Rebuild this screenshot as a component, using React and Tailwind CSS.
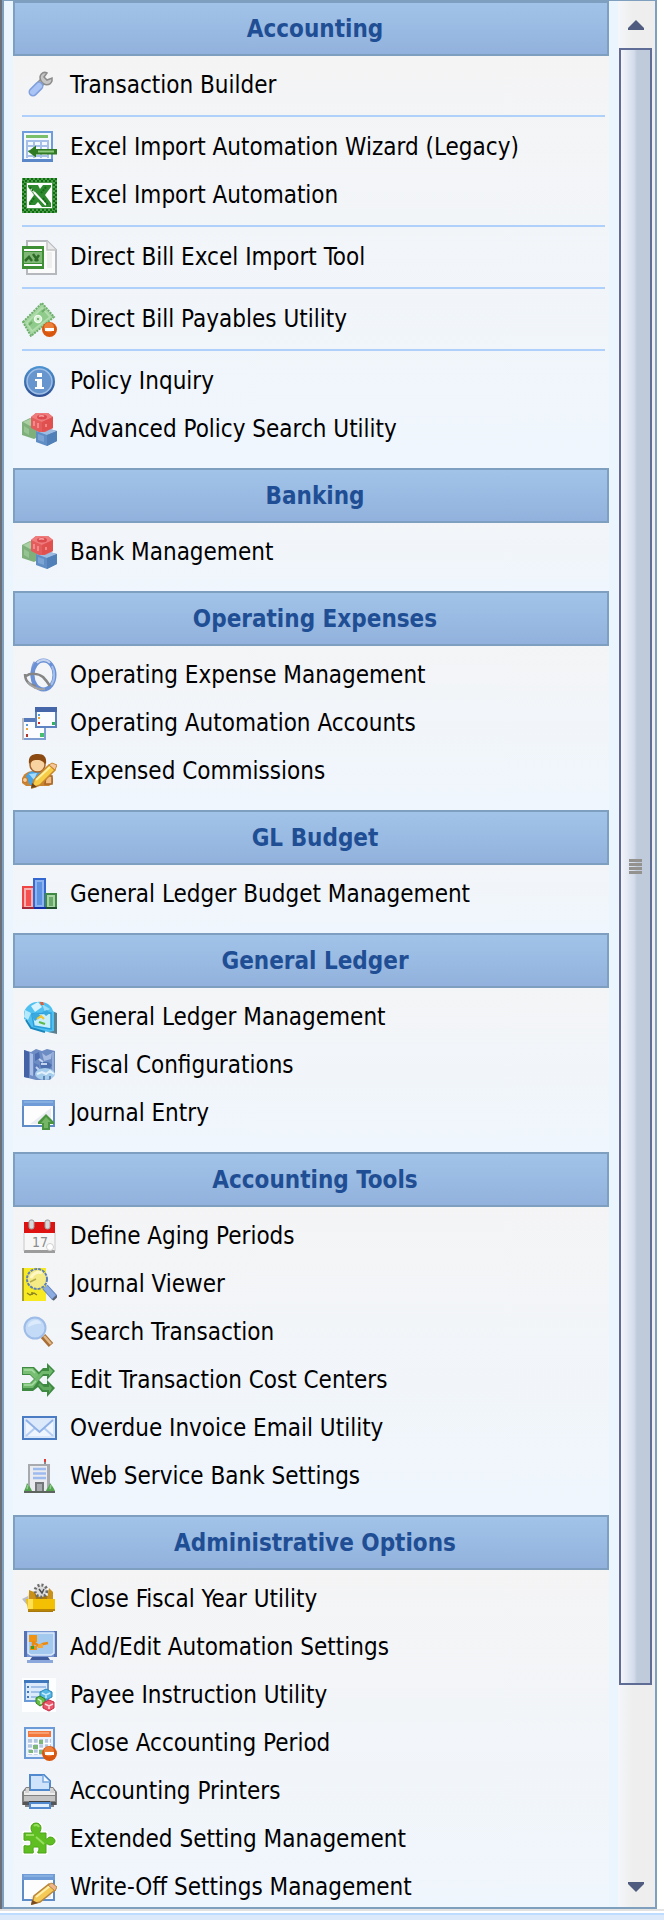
import React from 'react';

function Icon({ children }) {
  return (
    <svg viewBox="0 0 35 35" className="w-[35px] h-[35px] shrink-0" aria-hidden="true">
      {children}
    </svg>
  );
}

// small orange "minus" badge shared by a few icons
function MinusBadge() {
  return (
    <g>
      <circle cx="27.5" cy="27.5" r="7.5" fill="#d9560f" />
      <circle cx="27" cy="25.5" r="5" fill="#f08a45" opacity="0.8" />
      <rect x="23" y="26" width="9" height="3" fill="#fff" />
    </g>
  );
}

function WrenchIcon() {
  return (
    <Icon>
      <path d="M17 17l5-5" stroke="#8f8f8f" strokeWidth="7" />
      <path d="M17 17l5-5" stroke="#d4d4d4" strokeWidth="4" />
      <path d="M25 5c-4-2-9 2-6 8 3 5 9 5 11 0v-3l-5 2-3-3z" fill="#c6c6c6" stroke="#8c8c8c" strokeWidth="1.5" />
      <path d="M11 24l6-6" stroke="#7f9fdd" strokeWidth="9" strokeLinecap="round" />
      <path d="M11 24l6-6" stroke="#a9c4f5" strokeWidth="6" strokeLinecap="round" />
    </Icon>
  );
}

function SheetImportIcon() {
  return (
    <Icon>
      <rect x="1" y="2" width="29" height="29" fill="#f4f9ff" stroke="#6f9ddb" strokeWidth="2" />
      <rect x="4" y="5" width="22" height="3" fill="#7cbf6b" />
      <path d="M4 11h22M4 16h22M4 21h22M4 26h22M5 10v18M12 10v18M19 10v18M26 10v18" stroke="#a6bfe6" strokeWidth="2" />
      <rect x="0" y="29" width="31" height="3" fill="#5b86c7" />
      <path d="M6 21.500l8-6v3.500h21v5.500H14v3z" fill="#2f7a22" />
      <path d="M16 21.500h16" stroke="#8cc97e" strokeWidth="2" />
    </Icon>
  );
}

function ExcelIcon() {
  return (
    <Icon>
      <rect width="35" height="35" fill="#4d994d" />
      <rect x="1" y="1" width="33" height="33" fill="none" stroke="#0c6f0c" strokeWidth="2" strokeDasharray="2 2" />
      <rect x="3" y="3" width="29" height="29" fill="none" stroke="#0c6f0c" strokeWidth="2" strokeDasharray="2 2" />
      <rect x="5" y="5" width="25" height="25" fill="#fff" />
      <path d="M6 7h10l2 4 3-4h8v2l-6 8 6 8v4h-9l-4-5-3 3H7v-3l5-7-6-8z" fill="#2f8a2f" />
      <path d="M9 11l15 16" stroke="#fff" strokeWidth="2" />
      <path d="M8 9l4 5M24 9l-5 6M12 20l-4 6M21 20l5 7" stroke="#176c17" strokeWidth="2" strokeDasharray="2 1" />
    </Icon>
  );
}

function ExcelDocIcon() {
  return (
    <Icon>
      <path d="M5 1h20l9 9v24H5z" fill="#fbfbfb" stroke="#b5b9bd" strokeWidth="2" />
      <path d="M25 1v9h9" fill="#e9e9e9" stroke="#c4c4c4" strokeWidth="1.5" />
      <path d="M25 12h5v16h-5z" fill="#efefef" />
      <rect y="6" width="22" height="23" fill="#3f8f35" />
      <rect x="2" y="9" width="18" height="2" fill="#fff" />
      <rect x="2" y="24" width="18" height="2" fill="#fff" />
      <rect x="2" y="12" width="18" height="11" fill="#7fb776" />
      <path d="M3 21l4-4 3 4M11 14l5 7M17 15l-4 6" stroke="#2e6d27" strokeWidth="2.5" fill="none" />
    </Icon>
  );
}

function MoneyIcon() {
  return (
    <Icon>
      <path d="M1 20L20 1l12 14L9 34z" fill="#a5d6a1" stroke="#6fae6c" strokeWidth="2" strokeDasharray="2 1" />
      <path d="M5 21L20 6l8 9L10 29z" fill="#8fcb8b" stroke="#b5deb0" strokeWidth="1.5" />
      <path d="M7 23l3-3M20 10l3-3" stroke="#6dae69" strokeWidth="2" />
      <circle cx="16" cy="17" r="3.500" fill="#d5efd1" stroke="#f0faee" strokeWidth="1.5" />
      <circle cx="16" cy="17" r="1" fill="#5c9f5a" />
      <MinusBadge />
    </Icon>
  );
}

function InfoIcon() {
  return (
    <Icon>
      <defs>
        <linearGradient id="info" x2="0" y2="1">
          <stop offset="0" stopColor="#4d95d3" />
          <stop offset="1" stopColor="#2d4f92" />
        </linearGradient>
      </defs>
      <circle cx="17.5" cy="17.5" r="15.5" fill="url(#info)" />
      <circle cx="17.5" cy="17.5" r="12.5" fill="#6796cf" stroke="#a0bfe6" strokeWidth="1.5" />
      <rect x="15" y="9" width="5" height="4" fill="#fff" />
      <path d="M13 15h7v8h2v2h-9v-2h2v-6h-2z" fill="#fff" />
    </Icon>
  );
}

function CubesIcon() {
  return (
    <Icon>
      <path d="M0 10l8-4 8 4v15l-4 2-12-4z" fill="#7fb07c" />
      <path d="M1 10l7-3 7 3-7 4z" fill="#a9cfa3" />
      <path d="M2 14l5 3v6l-5-3z" fill="#95c391" />
      <path d="M14 19l10-3 11 3v10l-10 5-11-4z" fill="#5f8dc4" />
      <path d="M14 19l10-3 11 3-10 4z" fill="#9dbce2" />
      <path d="M25 23v11l10-5V19z" fill="#5180b8" />
      <path d="M16 22l6 2v6l-6-2z" fill="#7ba3d4" />
      <path d="M9 5l5-4h12l5 4v11l-8 4h-6l-8-4z" fill="#e45c5c" strokeLinejoin="round" />
      <path d="M9 5l5-4h12l5 4-11 5z" fill="#ee7c7c" />
      <path d="M20 10v10l11-4V5z" fill="#e0504f" />
      <ellipse cx="20" cy="5" rx="5" ry="2.5" fill="#dc4a50" />
      <path d="M17 4.500c1-1 4-1 5 0" fill="none" stroke="#f7a3a3" strokeWidth="1.5" />
      <path d="M12 9v5M16 11v5M24 12v3" stroke="#f29a9a" strokeWidth="1.5" />
    </Icon>
  );
}

function RingIcon() {
  return (
    <Icon>
      <path d="M13 4C9 10 9 24 14 30" fill="none" stroke="#8ba4d6" strokeWidth="3" />
      <ellipse cx="21.5" cy="17" rx="11" ry="14.5" fill="none" stroke="#6a90d6" strokeWidth="4" />
      <path d="M15 5c3-4 10-4 13 0" fill="none" stroke="#c6d4ee" strokeWidth="2" />
      <path d="M30 8c3 6 3 14-1 19" fill="none" stroke="#a5bde9" strokeWidth="2" />
      <path d="M3 16c0 8 6 12 11 12M4 18c4-3 12-3 17 1 3 3 5 6 7 9" fill="none" stroke="#858585" strokeWidth="2.5" />
      <path d="M6 24c3 5 10 8 17 7" fill="none" stroke="#a3a3a3" strokeWidth="2" />
    </Icon>
  );
}

function WindowsIcon() {
  return (
    <Icon>
      <rect x="1" y="13" width="22" height="20" fill="#fbfcff" stroke="#7f9fd2" strokeWidth="2" />
      <rect x="0" y="12" width="24" height="4" fill="#5579b9" />
      <rect x="0" y="12" width="2" height="22" fill="#b9bdc4" />
      <rect x="4" y="18" width="2" height="2" fill="#5b9bd8" />
      <rect x="4" y="22" width="2" height="2" fill="#f0a531" />
      <rect x="4" y="28" width="2" height="3" fill="#b4342b" />
      <rect x="18" y="27" width="4" height="4" fill="#46c06c" />
      <rect x="14" y="2" width="20" height="19" fill="#fbfcff" stroke="#5c82c2" strokeWidth="2" />
      <rect x="13" y="1" width="22" height="5" fill="#4566a8" />
      <rect x="16" y="8" width="2" height="2" fill="#5b9bd8" />
      <rect x="16" y="11" width="2" height="2" fill="#f0a531" />
      <rect x="16" y="16" width="2" height="2" fill="#d02a25" />
      <rect x="30" y="16" width="3" height="3" fill="#2fb45a" />
    </Icon>
  );
}

function PersonPencilIcon() {
  return (
    <Icon>
      <path d="M0 25c1-5 6-8 11-8h10c5 0 9 4 10 8v4l-4 3H4l-4-3z" fill="#c98335" />
      <path d="M4 23c1-4 5-6 9-6h7l-5 14H8z" fill="#45a3e6" />
      <path d="M7 20l5 6 3-7z" fill="#a6dbfb" />
      <path d="M24 22h6v8h-7z" fill="#f2bd85" stroke="#a66423" strokeWidth="1.5" />
      <circle cx="3" cy="26" r="2.5" fill="#f6cfa0" stroke="#c57b2c" strokeWidth="1.2" />
      <ellipse cx="15.5" cy="11" rx="7.5" ry="7" fill="#f9d2a2" stroke="#a9652a" strokeWidth="1.5" />
      <path d="M7 10c-1-8 3-10 9-10s9 3 8 10c-4-3-5-4-8-4-4 0-6 0-9 4z" fill="#8a4a12" />
      <path d="M10 34l2-8L27 11l6 5-15 15z" fill="#f7cc47" stroke="#c9872b" strokeWidth="1.5" />
      <path d="M14 26l14-13" stroke="#fff0a0" strokeWidth="2" />
      <path d="M27 11l3-2 5 2-2 5z" fill="#f3c6a0" stroke="#c9872b" strokeWidth="1" />
      <path d="M9 34l1-5 5 4z" fill="#6d4318" />
    </Icon>
  );
}

function BarsIcon() {
  return (
    <Icon>
      <rect x="1" y="10" width="11" height="21" fill="#f9b0b0" stroke="#ef4444" strokeWidth="2" />
      <rect x="4" y="13" width="5" height="16" fill="#f65050" />
      <rect x="12" y="2" width="11" height="29" fill="#8db4ee" stroke="#3467cf" strokeWidth="2" />
      <rect x="15" y="5" width="5" height="23" fill="#5e92e2" />
      <rect x="24" y="17" width="10" height="14" fill="#a9d3a6" stroke="#3f8a42" strokeWidth="2" />
      <rect x="27" y="20" width="4" height="9" fill="#6aa96b" />
      <path d="M0 31h12" stroke="#a12a3a" strokeWidth="2" />
      <path d="M12 31h12" stroke="#1330a8" strokeWidth="2" />
      <path d="M24 31h11" stroke="#1d4f2a" strokeWidth="2" />
    </Icon>
  );
}

function LedgerBoxIcon() {
  return (
    <Icon>
      <path d="M2 12C5 4 12 1 20 2c7 1 10 5 11 9l3 2v20l-8-1-17-4-3-7-4-2z" fill="#4fc0f0" />
      <path d="M32 12l3 1v21l-9-2 6-1z" fill="#5a7f8f" />
      <path d="M9 6l7-4 4 5-7 5z" fill="#d8f3fd" />
      <path d="M20 4l8 5-5 3z" fill="#9bdcf7" />
      <path d="M18 2l3 0 1 3-3 0z" fill="#ea5a2c" />
      <path d="M3 10l6 3-3 7-4-3z" fill="#b8e9fb" />
      <path d="M10 14l19-1v16l-17-3z" fill="#c9effb" stroke="#2a9fdb" strokeWidth="1.5" />
      <path d="M9 16l5-4 5 4-6 5zM20 12l5-2 3 3-4 3z" fill="#3aa9df" />
      <path d="M15 19l4-3 3 3" stroke="#f2c531" strokeWidth="2" fill="none" />
      <path d="M17 22l6 2" stroke="#5cb848" strokeWidth="2" />
      <path d="M4 20l5 8 14 4" stroke="#1a86bd" strokeWidth="2" fill="none" />
    </Icon>
  );
}

function FiscalIcon() {
  return (
    <Icon>
      <path d="M2 2l7 2 5-3 6 2 5-2 8 2v22l-5 7H14L2 29z" fill="#6d8cc4" />
      <path d="M2 2l5 2v26l-5-1z" fill="#4562a6" />
      <path d="M8 5l3 1v22l-3-1z" fill="#a9bfe5" />
      <path d="M13 6l4-2 1 6-5 3z" fill="#4e6eb1" />
      <path d="M20 5l4 3 6-3-1 6-7 2z" fill="#a5bbe2" />
      <path d="M12 15l5 2v8l-5 2z" fill="#5a79b8" />
      <path d="M18 14h8l4 3-3 5-8-1z" fill="#4d6fae" />
      <path d="M19 16h6M14 19l4 4M17 11l4 3" stroke="#c3d4ee" strokeWidth="2" />
      <path d="M31 4v20" stroke="#93abd7" strokeWidth="2" />
      <ellipse cx="23" cy="26" rx="10" ry="6" fill="#a7cdec" />
      <path d="M15 26l5-2 4 2 4-3 4 3" fill="none" stroke="#e0f1fc" strokeWidth="2" />
      <path d="M22 28v4M28 28v3" stroke="#6389b8" strokeWidth="2" />
    </Icon>
  );
}

function WindowFrame() {
  return (
    <g>
      <rect x="1" y="5" width="31" height="25" fill="#fdfdfe" stroke="#5f8cc6" strokeWidth="2" />
      <rect x="0" y="4" width="33" height="6" fill="#6f9cd6" />
      <path d="M2 6h29" stroke="#9cc0ec" strokeWidth="1" />
      <path d="M29 12v16H8z" fill="#e9ecf1" />
    </g>
  );
}

function WindowUpIcon() {
  return (
    <Icon>
      <WindowFrame />
      <path d="M24 18l8 8v2h-4v6h-8v-6h-4v-2z" fill="#4a9440" />
      <path d="M24 21l5 5h-3v6h-4v-5h-3z" fill="#74b566" />
    </Icon>
  );
}

function CalendarIcon() {
  return (
    <Icon>
      <rect x="2" y="3" width="31" height="31" fill="#f7f7f7" />
      <rect x="2" y="3" width="31" height="11" fill="#df1212" />
      <path d="M2 31h31v3H2z" fill="#9c9c9c" />
      <path d="M2 14v18M33 14v18" stroke="#c8c8c8" strokeWidth="1" />
      <rect x="7" y="1" width="5" height="9" rx="2" fill="#d9d9d9" stroke="#9c9c9c" />
      <rect x="23" y="1" width="5" height="9" rx="2" fill="#d9d9d9" stroke="#9c9c9c" />
      <text x="10" y="28" fontSize="14" fill="#8b8b8b" fontFamily="DejaVu Sans Condensed, sans-serif">17</text>
      <circle cx="28" cy="28" r="3.5" fill="#fff" stroke="#d0d0d0" />
    </Icon>
  );
}

function JournalIcon() {
  return (
    <Icon>
      <rect x="0" y="1" width="24" height="33" fill="#f8ea22" />
      <rect x="0" y="1" width="2" height="33" fill="#a39a36" />
      <path d="M5 26l3 2 4-2 3 2M10 28v-3" stroke="#8c8423" strokeWidth="1.5" fill="none" />
      <path d="M23 20l10 11" stroke="#6384c2" strokeWidth="7" />
      <path d="M23 20l9 10" stroke="#8cabde" strokeWidth="5" />
      <path d="M31 33l4-4" stroke="#5c6370" strokeWidth="2" />
      <circle cx="15" cy="12" r="10" fill="#f4ea86" stroke="#5d7fb5" strokeWidth="2" strokeDasharray="3 1" />
      <path d="M9 11c2-5 7-7 11-5" stroke="#fdf7c4" strokeWidth="3" fill="none" />
      <path d="M8 15l6-3" stroke="#b5a94e" strokeWidth="1.5" />
    </Icon>
  );
}

function MagnifierIcon() {
  return (
    <Icon>
      <path d="M21 21l8 9" stroke="#a86e35" strokeWidth="6" />
      <path d="M22 21l7 8" stroke="#e0b888" strokeWidth="2.5" />
      <circle cx="13" cy="13" r="10.5" fill="#c4dbf8" stroke="#9dbce8" strokeWidth="2" />
      <path d="M6 12c0-4 4-7 8-7 3 0 5 2 5 4-4-1-8 1-13 3z" fill="#dcebfc" />
    </Icon>
  );
}

function ShuffleIcon() {
  return (
    <Icon>
      <path d="M0 4h12l5 5 4-4h4V0l8 8-8 9v-4h-4l-4 4 4 4h4v-4l8 8-8 9v-5h-5l-4-5-5 4H0v-8h8l4-4-4-4H0z" fill="#3f8a42" />
      <path d="M1 5h10l6 7-4 4-5-5H1z" fill="#78bf74" />
      <path d="M1 20h8L20 8h7V4l4 4-4 5v-2h-6L11 25H1z" fill="#6fb86c" />
      <path d="M18 20l4 4h5v-3l3 4-3 5v-3h-6l-5-5z" fill="#5fa85e" />
      <path d="M2 7h8l3 3M2 22h8l4-4" stroke="#a9dca4" strokeWidth="1.5" fill="none" />
    </Icon>
  );
}

function MailIcon() {
  return (
    <Icon>
      <rect x="1" y="6" width="33" height="22" fill="#eef5ff" stroke="#4a7cc4" strokeWidth="2" />
      <rect x="3" y="8" width="29" height="18" fill="none" stroke="#c5d8f5" />
      <path d="M4 25l9-8M31 25l-9-8" stroke="#b4cdf2" strokeWidth="2" />
      <path d="M4 9l13.500 12L31 9z" fill="#dce9fb" />
      <path d="M4 9l13.500 12L31 9" fill="none" stroke="#8fb1e6" strokeWidth="2" />
    </Icon>
  );
}

function BuildingIcon() {
  return (
    <Icon>
      <rect x="22" y="1" width="2" height="6" fill="#8b8b8b" />
      <rect x="22" y="0" width="2" height="3" fill="#e03a31" />
      <rect x="6" y="5" width="22" height="28" fill="#a7abb0" />
      <rect x="8" y="7" width="17" height="26" fill="#e9ebee" />
      <path d="M11 10h13M11 14.500h13M11 19h13" stroke="#9dbbee" strokeWidth="2.5" />
      <rect x="13" y="23" width="9" height="10" fill="#74777a" />
      <rect x="15" y="25" width="5" height="8" fill="#a8abae" />
      <path d="M2 32c1-2 2-4 3-8 2 3 4 5 5 8zM24 32c1-3 3-4 4-8 2 3 4 5 5 8z" fill="#54a351" />
      <path d="M5 30l1-4M28 30l1-4" stroke="#8fce8a" strokeWidth="1.5" />
      <rect x="2" y="32" width="31" height="2" fill="#5e655f" />
    </Icon>
  );
}

function FolderGearIcon() {
  return (
    <Icon>
      <path d="M0 17l6-3v10z" fill="#bdbdbd" />
      <path d="M7 10h6l2 4h14l2-4v20H6z" fill="#a8780c" />
      <circle cx="19" cy="9" r="6" fill="#dcdcdc" stroke="#6b6b6b" strokeWidth="3" strokeDasharray="2 2" />
      <path d="M17 7l3 4 2-4" stroke="#4e4e4e" strokeWidth="1.5" fill="none" />
      <path d="M7 8l5 2 2 7H7zM27 6l4 4v7h-6z" fill="#c9911a" />
      <path d="M4 17h29v11H6z" fill="#f3c004" />
      <path d="M6 17h5v10H6z" fill="#ffdf54" />
      <path d="M6 28h27" stroke="#b98505" strokeWidth="2" />
    </Icon>
  );
}

function MonitorIcon() {
  return (
    <Icon>
      <path d="M2 1h33v26H2z" fill="#7897d2" />
      <path d="M2 1h3v26H2zM32 1h3v26h-3z" fill="#5573b4" />
      <path d="M6 3h26v20l-3 2H9l-3-2z" fill="#a3c9ef" stroke="#dceafa" strokeWidth="1.5" />
      <rect x="7" y="5" width="8" height="7" fill="#f09312" />
      <path d="M11 12l6 4 4-2 5-1M11 11v6" stroke="#ea8a10" strokeWidth="2.5" fill="none" />
      <rect x="16" y="14" width="5" height="4" fill="#f5a63a" />
      <rect x="8" y="16" width="7" height="4" fill="#f09312" />
      <rect x="9" y="16" width="3" height="3" fill="#35a02b" />
      <path d="M10 27h16l2 3H8z" fill="#3e5c9e" />
      <path d="M5 31.500h26" stroke="#8ca7db" strokeWidth="3" />
    </Icon>
  );
}

function FormCubesIcon() {
  return (
    <Icon>
      <rect width="34" height="34" fill="#fdfeff" />
      <rect x="3" y="3" width="23" height="20" fill="#dcebfb" stroke="#6b9bd6" strokeWidth="2" />
      <rect x="2" y="2" width="25" height="3" fill="#3f78bd" />
      <path d="M5 9h2M5 14h2M5 19h2" stroke="#3f78bd" strokeWidth="2" />
      <path d="M9 9h15M9 14h12M9 19h8" stroke="#8cb3e2" strokeWidth="1.5" />
      <path d="M24 11l6 3v5l-6 3-6-3v-5z" fill="#56b7e5" stroke="#2b87b8" />
      <path d="M20 15l4 2 4-2M24 17v3" stroke="#c7ecfb" strokeWidth="1.5" fill="none" />
      <path d="M18 18l5 3v4l-5 3-4-3v-5z" fill="#65bd47" stroke="#2f8421" />
      <path d="M16 21l3 2v3" stroke="#d6f3cb" strokeWidth="1.5" fill="none" />
      <path d="M27 22l5 2v6l-5 3-6-3v-5z" fill="#e8566a" stroke="#c92a41" />
      <path d="M23 26l4 2 4-2M27 28v3" stroke="#ffd9de" strokeWidth="1.5" fill="none" />
    </Icon>
  );
}

function CalculatorIcon() {
  return (
    <Icon>
      <rect x="3" y="2" width="29" height="30" fill="#e9f1fc" stroke="#6d9bd8" strokeWidth="2" />
      <rect x="6" y="5" width="23" height="6" fill="#f2773c" />
      <path d="M7 7h20" stroke="#f9ad83" strokeWidth="1.5" />
      <rect x="6" y="13" width="23" height="16" fill="#b4c6e0" />
      <path d="M6 17.500h23M6 22.500h23M6 27.500h23M11 13v16M16.500 13v16M22 13v16M27 13v16" stroke="#fff" strokeWidth="1.5" />
      <path d="M17 14h4v4h-4zM11 19h5v4h-5zM17 24h4v4h-4zM7 24h4v3H7z" fill="#7db779" />
      <MinusBadge />
    </Icon>
  );
}

function PrinterIcon() {
  return (
    <Icon>
      <path d="M8 16V1h14l6 6v9z" fill="#cfe3fb" stroke="#5089cd" strokeWidth="2" />
      <path d="M21 1v7h7" fill="#f1f8ff" stroke="#7aa7df" strokeWidth="1.5" />
      <path d="M0 18l4-5h4v4h20v-4h3l4 5v13h-3v2H3v-2H0z" fill="#818181" />
      <path d="M2 17h31v4H2z" fill="#ededed" />
      <path d="M2 22h31v5H2z" fill="#c4c4c4" />
      <path d="M4 14h3v5H3zM28 14h3l2 5h-5z" fill="#d3d3d3" />
      <path d="M1 28h7v3H1zM28 28h6v3h-6z" fill="#555" />
      <path d="M7 28h21" stroke="#3f3f3f" strokeWidth="2" />
      <path d="M8 29h20v5H8z" fill="#e2effd" stroke="#5089cd" strokeWidth="2" />
    </Icon>
  );
}

function PuzzleIcon() {
  const shape =
    'M2 11h8c1-1-1-2-1-5 0-3 2-5 5-5s5 2 5 5c0 3-2 4-1 5h6v6c1 1 2-2 4-2 3 0 5 2 5 4s-2 4-5 4c-2 0-3-2-4-1v9h-8c-1-1 1-2 1-4s-1-2-3-2-3 0-3 2 1 3 0 4H2v-7c1-1 2 0 4 0s3-1 3-3-1-3-3-3-3 1-4 0z';
  return (
    <Icon>
      <path d={shape} fill="#fff" stroke="#fff" strokeWidth="4" strokeLinejoin="round" />
      <path d={shape} fill="#5fbf22" stroke="#4ba41c" strokeWidth="1" />
      <path d="M12 4c2-2 4-1 5 1M4 13h8M14 15l8 7" stroke="#97de5f" strokeWidth="2" fill="none" />
    </Icon>
  );
}

function WindowPencilIcon() {
  return (
    <Icon>
      <WindowFrame />
      <path d="M10 34l2-8 15-12 6 6-15 12z" fill="#f5c955" stroke="#b9863a" strokeWidth="1.5" />
      <path d="M14 27l14-11" stroke="#fff0ae" strokeWidth="2" />
      <path d="M26 15l4-2 5 4-2 4z" fill="#efb58c" stroke="#b9863a" />
      <path d="M9 35l1-5 6 3z" fill="#7a4a1c" />
    </Icon>
  );
}

// groups inside a section are divided by a thin rule
const sections = [
  {
    title: 'Accounting',
    groups: [
      [{ label: 'Transaction Builder', icon: WrenchIcon }],
      [
        { label: 'Excel Import Automation Wizard (Legacy)', icon: SheetImportIcon },
        { label: 'Excel Import Automation', icon: ExcelIcon },
      ],
      [{ label: 'Direct Bill Excel Import Tool', icon: ExcelDocIcon }],
      [{ label: 'Direct Bill Payables Utility', icon: MoneyIcon }],
      [
        { label: 'Policy Inquiry', icon: InfoIcon },
        { label: 'Advanced Policy Search Utility', icon: CubesIcon },
      ],
    ],
  },
  {
    title: 'Banking',
    groups: [[{ label: 'Bank Management', icon: CubesIcon }]],
  },
  {
    title: 'Operating Expenses',
    groups: [
      [
        { label: 'Operating Expense Management', icon: RingIcon },
        { label: 'Operating Automation Accounts', icon: WindowsIcon },
        { label: 'Expensed Commissions', icon: PersonPencilIcon },
      ],
    ],
  },
  {
    title: 'GL Budget',
    groups: [[{ label: 'General Ledger Budget Management', icon: BarsIcon }]],
  },
  {
    title: 'General Ledger',
    groups: [
      [
        { label: 'General Ledger Management', icon: LedgerBoxIcon },
        { label: 'Fiscal Configurations', icon: FiscalIcon },
        { label: 'Journal Entry', icon: WindowUpIcon },
      ],
    ],
  },
  {
    title: 'Accounting Tools',
    groups: [
      [
        { label: 'Define Aging Periods', icon: CalendarIcon },
        { label: 'Journal Viewer', icon: JournalIcon },
        { label: 'Search Transaction', icon: MagnifierIcon },
        { label: 'Edit Transaction Cost Centers', icon: ShuffleIcon },
        { label: 'Overdue Invoice Email Utility', icon: MailIcon },
        { label: 'Web Service Bank Settings', icon: BuildingIcon },
      ],
    ],
  },
  {
    title: 'Administrative Options',
    groups: [
      [
        { label: 'Close Fiscal Year Utility', icon: FolderGearIcon },
        { label: 'Add/Edit Automation Settings', icon: MonitorIcon },
        { label: 'Payee Instruction Utility', icon: FormCubesIcon },
        { label: 'Close Accounting Period', icon: CalculatorIcon },
        { label: 'Accounting Printers', icon: PrinterIcon },
        { label: 'Extended Setting Management', icon: PuzzleIcon },
        { label: 'Write-Off Settings Management', icon: WindowPencilIcon },
      ],
    ],
  },
];

function MenuItem({ item }) {
  const ItemIcon = item.icon;
  return (
    <li>
      <a href="#" className="flex items-center gap-[13px] h-12 text-2xl text-black whitespace-nowrap">
        <ItemIcon />
        <span>{item.label}</span>
      </a>
    </li>
  );
}

function MenuSection({ section }) {
  return (
    <section className="shrink-0 bg-linear-to-b from-[#f5f4f4] to-[#eff6fd]">
      <h2 className="flex items-center justify-center h-[55px] pl-2 border-2 border-[#7f9fc0] bg-linear-to-b from-[#a1c3e8] to-[#92b2dd] text-2xl font-bold text-[#1f4e94]">
        {section.title}
      </h2>
      <div className="pt-[5px] pb-[15px] pl-[9px] pr-1">
        {section.groups.map((group, i) => (
          <React.Fragment key={i}>
            {i > 0 && <hr className="my-[6px] border-t-2 border-[#aed0fb]" />}
            <ul>
              {group.map((item) => (
                <MenuItem key={item.label} item={item} />
              ))}
            </ul>
          </React.Fragment>
        ))}
      </div>
    </section>
  );
}

function Scrollbar() {
  return (
    <div className="flex flex-col w-[37px] shrink-0 pl-px pr-[3px] bg-linear-to-r from-[#f4f6fa] to-[#eeeeee] to-40%">
      <button aria-label="Scroll up" className="flex items-center justify-center h-[47px] shrink-0">
        <svg viewBox="0 0 16 10" className="w-4 h-[10px]">
          <path d="M8 0l8 8v2H0V8z" fill="#4f5c80" />
        </svg>
      </button>
      <div className="flex-1 min-h-0">
        <div className="flex flex-col items-center justify-center gap-px h-9/10 border-2 border-[#5e6c96] bg-linear-to-r from-[#f4f5fa] via-[#d3dceb] via-45% to-[#bfcbdb] to-55%">
          <span className="w-[13px] h-[3px] bg-[#94928e]"></span>
          <span className="w-[13px] h-[3px] bg-[#94928e]"></span>
          <span className="w-[13px] h-[3px] bg-[#94928e]"></span>
          <span className="w-[13px] h-[3px] bg-[#94928e]"></span>
        </div>
      </div>
      <button aria-label="Scroll down" className="flex items-center justify-center h-10 shrink-0">
        <svg viewBox="0 0 16 10" className="w-4 h-[10px]">
          <path d="M8 10L0 2V0h16v2z" fill="#4f5c80" />
        </svg>
      </button>
    </div>
  );
}

export default function App() {
  return (
    <div className="flex flex-col h-screen bg-white font-['DejaVu_Sans_Condensed','DejaVu_Sans',sans-serif]">
      <div className="flex flex-1 min-h-0 pr-[7px]">
        <div className="w-[2px] shrink-0 bg-[#6b6f78]"></div>
        <div className="flex flex-1 min-w-0 border-x-2 border-b-2 border-t border-[#7f9fbf] bg-[#ebf5fe]">
          <nav className="flex flex-col flex-1 min-w-0 overflow-hidden pl-[9px] pr-[9px]">
            {sections.map((section) => (
              <MenuSection key={section.title} section={section} />
            ))}
          </nav>
          <Scrollbar />
        </div>
      </div>
      <footer className="h-[11px] shrink-0 border-t-2 border-[#e2e2e2] pt-[2px]">
        <div className="h-full border-t-2 border-[#bddcff] bg-[#dce9fb]"></div>
      </footer>
    </div>
  );
}
